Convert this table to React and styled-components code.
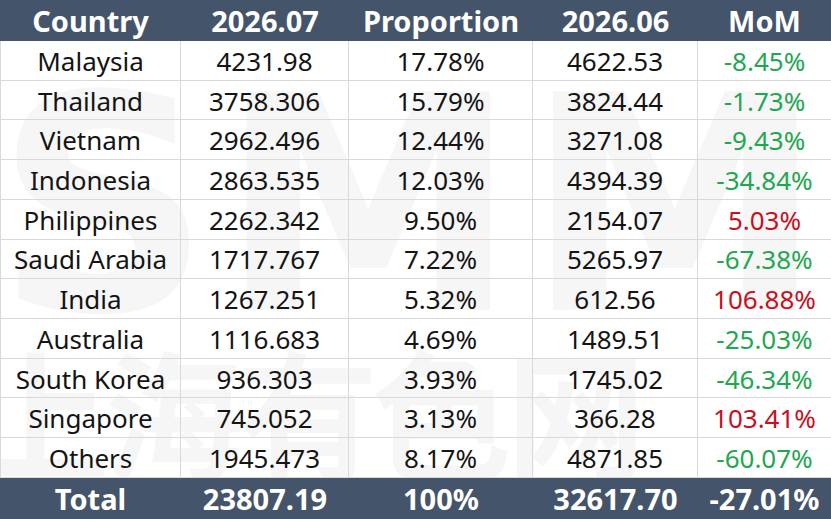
import React from 'react'
import styled, { createGlobalStyle } from 'styled-components'

const GlobalStyle = createGlobalStyle`
  html, body {
    margin: 0;
    padding: 0;
    background: #ffffff;
  }
  body {
    font-family: "Noto Sans", "Noto Sans CJK SC", sans-serif;
  }
`

const rows = [
  ['Malaysia', '4231.98', '17.78%', '4622.53', '-8.45%'],
  ['Thailand', '3758.306', '15.79%', '3824.44', '-1.73%'],
  ['Vietnam', '2962.496', '12.44%', '3271.08', '-9.43%'],
  ['Indonesia', '2863.535', '12.03%', '4394.39', '-34.84%'],
  ['Philippines', '2262.342', '9.50%', '2154.07', '5.03%'],
  ['Saudi Arabia', '1717.767', '7.22%', '5265.97', '-67.38%'],
  ['India', '1267.251', '5.32%', '612.56', '106.88%'],
  ['Australia', '1116.683', '4.69%', '1489.51', '-25.03%'],
  ['South Korea', '936.303', '3.93%', '1745.02', '-46.34%'],
  ['Singapore', '745.052', '3.13%', '366.28', '103.41%'],
  ['Others', '1945.473', '8.17%', '4871.85', '-60.07%'],
]

const Frame = styled.div`
  position: relative;
  width: 831px;
  height: 519px;
  overflow: hidden;
  background: #ffffff;
`

// faint SMM watermark sitting behind the table body
const Watermark = styled.svg`
  position: absolute;
  left: 0;
  top: 0;
  pointer-events: none;
  z-index: 0;
`

const Grid = styled.div`
  position: relative;
  z-index: 1;
  display: grid;
  grid-template-columns: 181px 168px 184px 165px 133px;
  grid-template-rows: 41px repeat(11, 39.73px) 41px;
`

const Cell = styled.div`
  display: flex;
  align-items: center;
  justify-content: center;
  box-sizing: border-box;
  white-space: nowrap;
  font-size: 26px;
  color: ${p => p.$tone === 'up' ? '#c8101e' : p.$tone === 'down' ? '#1fa751' : '#141414'};
  border-right: ${p => p.$last ? 'none' : '1px solid #d9d9d9'};
  border-bottom: 1px solid #d9d9d9;
  border-left: ${p => p.$first ? '1px solid #d9d9d9' : 'none'};
  padding-top: 1px;
`

const HeadCell = styled.div`
  display: flex;
  align-items: center;
  justify-content: center;
  white-space: nowrap;
  background: #44546a;
  color: #ffffff;
  font-weight: 700;
  font-size: 29px;
`

const toneOf = v => (v.startsWith('-') ? 'down' : 'up')

export default function App() {
  return (
    <>
      <GlobalStyle />
      <Frame>
        <Watermark width="831" height="519" aria-hidden="true">
          <g fill="#000" fillOpacity="0.035" fontWeight="700">
            <text x="-5" y="310" fontSize="300" fontFamily="DejaVu Sans, sans-serif" letterSpacing="8">SMM</text>
            <text x="-30" y="470" fontSize="140" fontFamily="Noto Sans CJK SC, sans-serif" letterSpacing="-6">上海有色网</text>
          </g>
        </Watermark>
        <Grid>
          {['Country', '2026.07', 'Proportion', '2026.06', 'MoM'].map(h => (
            <HeadCell key={h}>{h}</HeadCell>
          ))}
          {rows.map(r =>
            r.map((v, i) => (
              <Cell
                key={r[0] + i}
                $first={i === 0}
                $last={i === 4}
                $tone={i === 4 ? toneOf(v) : undefined}
              >
                {v}
              </Cell>
            ))
          )}
          {['Total', '23807.19', '100%', '32617.70', '-27.01%'].map(t => (
            <HeadCell key={t}>{t}</HeadCell>
          ))}
        </Grid>
      </Frame>
    </>
  )
}
